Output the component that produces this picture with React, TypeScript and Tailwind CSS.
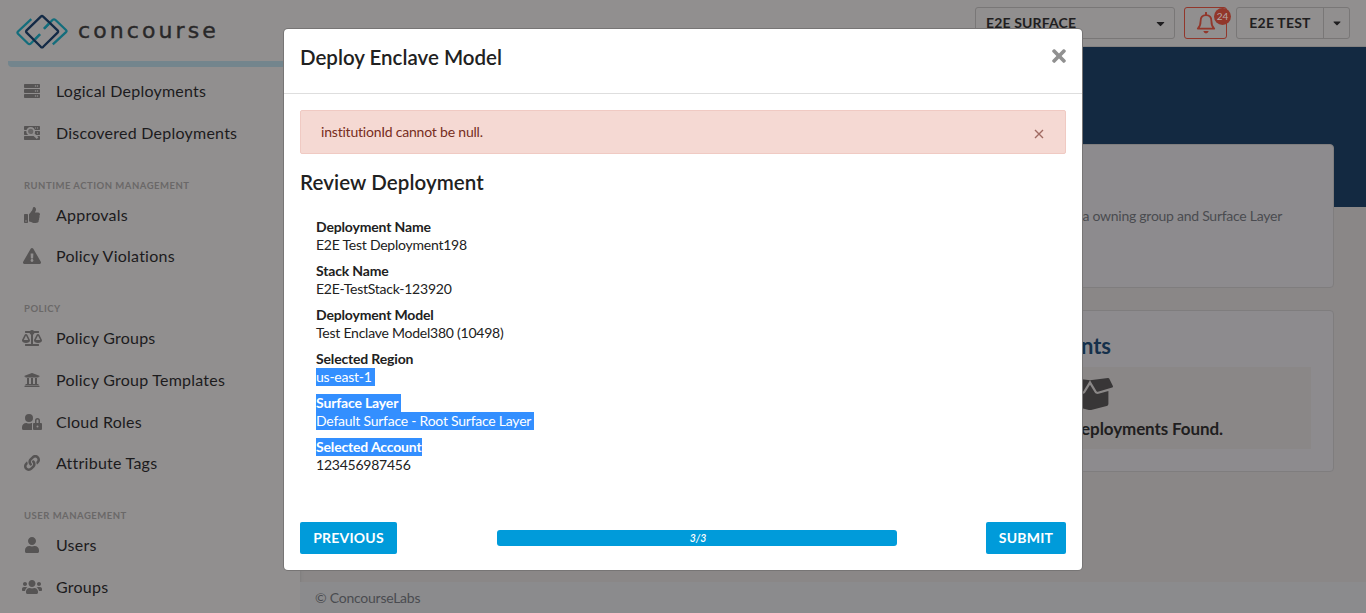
import React from "react";
import {
  FaServer,
  FaThumbsUp,
  FaExclamationTriangle,
  FaBalanceScale,
  FaUniversity,
  FaUserLock,
  FaLink,
  FaUser,
  FaUsers,
  FaBoxOpen,
  FaTimes,
  FaCaretDown,
} from "react-icons/fa";

function DiscoverIcon() {
  return (
    <svg width="16" height="16" viewBox="0 0 16 16">
      <g fill="#565454">
        <rect x="0" y="1" width="16" height="4" rx="0.7" />
        <rect x="0" y="6" width="16" height="4" rx="0.7" />
        <rect x="0" y="11" width="16" height="4" rx="0.7" />
      </g>
      <g fill="#918f8f">
        <rect x="11" y="2.5" width="1" height="1" />
        <rect x="13" y="2.5" width="1" height="1" />
        <rect x="13" y="7.5" width="1" height="1" />
      </g>
      <circle cx="6.7" cy="6.4" r="3.5" fill="#686666" stroke="#918f8f" strokeWidth="1.8" />
      <path d="M9.5 9.2 L13.6 13.2" stroke="#918f8f" strokeWidth="2.4" />
    </svg>
  );
}

function Logo() {
  return (
    <svg width="52" height="36" viewBox="0 0 52 36" fill="none" strokeWidth="2.3" strokeLinecap="butt" strokeLinejoin="round">
      <path d="M15.3 5.2 L2 17.5 Q1 18.6 2 19.7 L12 29.5 Q13.4 30.8 14.8 29.5 L24 20.3" stroke="#136d7c" />
      <path d="M28 14.8 L36.5 6 Q38 4.7 39.5 6 L50 16 Q51 17 50 18.1 L36.8 30.4" stroke="#136d7c" />
      <path d="M24.8 2.6 Q26 1.5 27.2 2.6 L41.6 16.4 Q42.7 17.5 41.6 18.6 L27.2 32.8 Q26 33.9 24.8 32.8 L10.6 18.6 Q9.5 17.5 10.6 16.4 Z" stroke="#132a46" />
      <path d="M19 25.4 L24 20.3 M28 14.8 L33 9.6" stroke="#136d7c" />
    </svg>
  );
}

function Bell() {
  return (
    <svg width="20" height="22" viewBox="0 0 20 22" fill="none">
      <path d="M10 0.8 V3" stroke="#92372b" strokeWidth="2" strokeLinecap="round" />
      <path d="M1.8 16.6 C3.6 15 4.6 13.2 4.6 9 C4.6 5.4 6.8 3.2 10 3.2 C13.2 3.2 15.4 5.4 15.4 9 C15.4 13.2 16.4 15 18.2 16.6 Z" stroke="#92372b" strokeWidth="1.8" strokeLinejoin="round" />
      <path d="M7.3 19 H12.7 Q12 21.4 10 21.4 Q8 21.4 7.3 19 Z" fill="#92372b" />
    </svg>
  );
}

function NavItem({ icon, children }: { icon: React.ReactNode; children: React.ReactNode }) {
  return (
    <div className="flex h-[41.7px] items-center">
      <span className="flex w-16 shrink-0 items-center justify-center text-[#565454] [&>svg]:h-4 [&>svg]:w-5">{icon}</span>
      <span className="-ml-2 text-[16px] tracking-[0.24px] whitespace-nowrap text-[#1c1b1d]">{children}</span>
    </div>
  );
}

function NavHeading({ children }: { children: React.ReactNode }) {
  return (
    <div className="flex h-10 items-end pb-[2px] pl-6 text-[9.5px] leading-[12px] font-bold tracking-[0.5px] text-[#6a6868]">
      {children}
    </div>
  );
}

function Field({ label, value, mark = "none" }: { label: string; value: string; mark?: "none" | "label" | "value" | "both" }) {
  const labelOn = mark === "label" || mark === "both";
  const valueOn = mark === "value" || mark === "both";
  return (
    <div className="mb-2 flex flex-col items-start text-[14px] leading-[18px] tracking-[-0.24px] whitespace-nowrap">
      <span className={`font-bold tracking-[-0.16px] ${labelOn ? "bg-[#338fff] text-white" : "text-[#212121]"} ${mark === "both" ? "pr-[3px]" : ""}`}>
        {label}
      </span>
      <span className={valueOn ? "bg-[#338fff] pr-[3px] text-white" : "text-[#212121]"}>{value}</span>
    </div>
  );
}

export default function App() {
  return (
    <div className="relative flex h-[613px] w-full flex-col overflow-hidden bg-[#8a8787] font-['Lato',sans-serif]">
      <header className="relative flex h-[47px] shrink-0 bg-[#918f8f]">
        <div className="flex w-[300px] items-start pt-[13.5px] pl-4">
          <Logo />
          <span className="ml-[10px] pt-[2px] font-['DejaVu_Sans',sans-serif] text-[22px] leading-[30px] tracking-[3.1px] text-[#292829] [-webkit-text-stroke:0.4px_#292829]">
            concourse
          </span>
        </div>
        <div className="flex flex-1 justify-end border-b border-[#838181] pt-[7px] pr-4 text-[14px] font-bold text-[#1f1e20]">
          <div className="flex h-8 w-[200px] items-center justify-between rounded-[3px] border border-[#797777] pr-[7px] pl-[10px]">
            <span className="pb-[2px] tracking-[0.15px]">E2E SURFACE</span>
            <FaCaretDown size={13} />
          </div>
          <div className="relative ml-[9px] flex h-8 w-[43px] items-center justify-center rounded-[3px] border border-[#92372b]">
            <Bell />
            <span className="absolute top-0 -right-[5px] flex h-[17px] w-[17px] items-center justify-center rounded-full bg-[#92372b] text-[10px] font-normal text-[#b5aaa8]">
              24
            </span>
          </div>
          <div className="ml-[9px] flex h-8 w-[114px] rounded-[3px] border border-[#797777]">
            <span className="flex w-[87px] items-center justify-center border-r border-[#797777] pb-[2px] tracking-[0.2px]">E2E TEST</span>
            <span className="flex flex-1 items-center justify-center">
              <FaCaretDown size={12} />
            </span>
          </div>
        </div>
      </header>

      <div className="flex min-h-0 flex-1">
        <aside className="w-[300px] shrink-0 overflow-hidden bg-[#918f8f] pt-[14px] shadow-[0_2px_3px_#777]">
          <div className="mb-[3.5px] ml-2 h-[6px] rounded-bl-[4px] bg-[#73858d]" />
          <NavItem icon={<FaServer />}>Logical Deployments</NavItem>
          <NavItem icon={<DiscoverIcon />}>Discovered Deployments</NavItem>
          <NavHeading>RUNTIME ACTION MANAGEMENT</NavHeading>
          <NavItem icon={<FaThumbsUp />}>Approvals</NavItem>
          <NavItem icon={<FaExclamationTriangle />}>Policy Violations</NavItem>
          <div className="pt-[0.2px]">
            <NavHeading>POLICY</NavHeading>
          </div>
          <NavItem icon={<FaBalanceScale />}>Policy Groups</NavItem>
          <NavItem icon={<FaUniversity />}>Policy Group Templates</NavItem>
          <NavItem icon={<FaUserLock />}>Cloud Roles</NavItem>
          <NavItem icon={<FaLink />}>Attribute Tags</NavItem>
          <NavHeading>USER MANAGEMENT</NavHeading>
          <NavItem icon={<FaUser />}>Users</NavItem>
          <NavItem icon={<FaUsers />}>Groups</NavItem>
        </aside>

        <main className="flex min-w-0 flex-1 flex-col">
          <div className="flex min-h-0 flex-1 flex-col gap-[22px] bg-[linear-gradient(#132941,#132941)] bg-[length:100%_160px] bg-no-repeat px-8 pt-[97px]">
            <section className="flex h-[144px] shrink-0 items-center justify-end rounded-[4px] border border-[#7f7d7e] bg-[#8d8b8e] pr-[51px] pb-[2px] text-[14px] tracking-[-0.26px] text-[#4a4b50]">
              a owning group and Surface Layer
            </section>
            <div className="grid h-[162px] shrink-0 grid-cols-2 gap-[22px]">
              <section className="rounded-[4px] border border-[#7f7d7e] bg-[#8d8b8e]" />
              <section className="flex flex-col rounded-[4px] border border-[#7f7d7e] bg-[#8d8b8e] px-[22px]">
                <h2 className="mt-[20px] mb-[6px] pr-[200px] text-right text-[22px] leading-[30px] font-bold text-[#15304b]">Deployments</h2>
                <div className="flex h-[82px] flex-col items-center bg-[#8a8787]">
                  <FaBoxOpen className="mt-[6px] ml-[2px] h-[42px] w-[46px] text-[#383637]" />
                  <span className="self-end pt-px pr-[88px] text-[17px] leading-[26px] font-bold tracking-[-0.1px] text-[#1f1e20]">Deployments Found.</span>
                </div>
              </section>
            </div>
          </div>
          <footer className="h-[31px] shrink-0 bg-[#8b8b8d] pl-[15px] text-[14px] leading-[32px] tracking-[-0.24px] text-[#4a4b50]">© ConcourseLabs</footer>
        </main>
      </div>

      <div className="absolute inset-0 flex justify-center pt-[29px]" role="dialog">
        <div className="flex h-[541px] w-[798px] flex-col rounded-[4px] bg-white shadow-[0_0_0_1px_#777575]">
          <div className="flex h-[65px] shrink-0 items-start justify-between border-b border-[#dedede] px-4 pt-[15px]">
            <h1 className="text-[20.5px] leading-[26px] font-semibold text-[#212121]">Deploy Enclave Model</h1>
            <FaTimes className="mt-[2px] -mr-[3px] text-[20px] text-[#909090]" />
          </div>
          <div className="flex min-h-0 flex-1 flex-col px-4 pt-4">
            <div className="flex h-11 shrink-0 items-center justify-between rounded-[2px] border border-[#f0cac3] bg-[#f5d9d3] px-5 text-[14px] tracking-[-0.2px] text-[#772d21]">
              <span className="pb-[2px]">institutionId cannot be null.</span>
              <svg width="12" height="12" viewBox="0 0 12 12" className="mt-1" stroke="#a06a62" strokeWidth="1.4">
                <path d="M2 2 L10 10 M10 2 L2 10" />
              </svg>
            </div>
            <h2 className="mt-[15px] text-[20.5px] leading-[26px] font-semibold tracking-[0.1px] text-[#212121]">Review Deployment</h2>
            <div className="mt-[23px] pl-4">
              <Field label="Deployment Name" value="E2E Test Deployment198" />
              <Field label="Stack Name" value="E2E-TestStack-123920" />
              <Field label="Deployment Model" value="Test Enclave Model380 (10498)" />
              <Field label="Selected Region" value="us-east-1" mark="value" />
              <Field label="Surface Layer" value="Default Surface - Root Surface Layer" mark="both" />
              <Field label="Selected Account" value="123456987456" mark="label" />
            </div>
          </div>
          <div className="flex h-16 shrink-0 items-center justify-between px-4 text-[14px] font-bold text-white">
            <button className="h-8 w-[97px] rounded-[2px] bg-[#009bda] pb-[2px] tracking-[0.2px]">PREVIOUS</button>
            <div className="ml-[11px] flex h-4 w-[400px] items-center justify-center rounded-[3px] bg-[#009bda] pt-px pl-[2px] text-[10.5px] font-semibold italic">3/3</div>
            <button className="h-8 w-[80px] rounded-[2px] bg-[#009bda] pb-[2px] tracking-[0.2px]">SUBMIT</button>
          </div>
        </div>
      </div>
    </div>
  );
}
